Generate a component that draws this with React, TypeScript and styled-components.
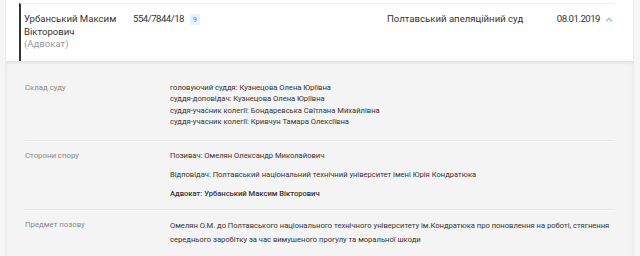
import * as React from "react";
import styled, { createGlobalStyle } from "styled-components";

const GlobalStyle = createGlobalStyle`
  html, body {
    margin: 0;
    padding: 0;
    background: #f6f6f8;
  }
  body {
    font-family: Roboto, "Liberation Sans", Arial, sans-serif;
    color: #333;
  }
`;

const Wrapper = styled.div`
  margin: 0 6px 0 5px;
  height: 256px;
  background: #fff;
  border-left: 1px solid #ececee;
  border-right: 1px solid #ececee;
  padding-top: 3px;
  box-sizing: border-box;
  overflow: hidden;
`;

const Row = styled.div`
  margin: 0 19px 0 13px;
  border-top: 1px solid #efefef;
  border-left: 2px solid ${({ $active }: { $active?: boolean }) =>
    $active ? "#333" : "transparent"};
  padding: 9px 0 10px 3px;
  display: flex;
  align-items: flex-start;
  font-size: 9.6px;
  line-height: 12.5px;
`;

const NameCol = styled.div`
  width: 104px;
  margin-right: 5px;
  flex-shrink: 0;
`;

const Role = styled.div`
  color: #999;
`;

const Digits = styled.span`
  letter-spacing: -0.5px;
`;

const NumberCol = styled.div`
  width: 254px;
  flex-shrink: 0;
  display: flex;
  align-items: center;
  gap: 6px;
`;

const Badge = styled.span`
  display: inline-block;
  min-width: 10px;
  height: 11px;
  line-height: 11px;
  text-align: center;
  font-size: 7.5px;
  color: #4a8fd6;
  background: #e6f0fa;
  border-radius: 2px;
`;

const CourtCol = styled.div`
  flex: 1;
`;

const DateCol = styled.div`
  display: flex;
  align-items: center;
  gap: 5px;
`;

const Chevron = styled.svg`
  width: 8px;
  height: 5px;
  margin-right: 1px;
`;

const Details = styled.div`
  background: #f4f4f4;
  box-shadow: inset 0 2px 3px rgba(0, 0, 0, 0.08);
  padding: 11px 19px 0 19px;
  height: 100%;
`;

const Section = styled.div`
  display: flex;
  padding: ${({ $first }: { $first?: boolean }) =>
    $first ? "10px 0 12px 0" : "9px 0 10px 0"};
  border-top: ${({ $first }: { $first?: boolean }) =>
    $first ? "none" : "1px solid #e6e6e6"};
  box-shadow: ${({ $first }: { $first?: boolean }) =>
    $first ? "none" : "inset 0 1px 0 #fbfbfb"};
`;

const Label = styled.div`
  width: 145px;
  flex-shrink: 0;
  font-size: 7.8px;
  line-height: 11.5px;
  color: #888;
`;

const Values = styled.div`
  flex: 1;
  font-size: 7.6px;
  line-height: ${({ $lh }: { $lh?: number }) => ($lh ? $lh : 11.5)}px;
  color: #333;
`;

const Party = styled.div`
  margin-bottom: 7.5px;
  font-weight: ${({ $bold }: { $bold?: boolean }) => ($bold ? 500 : 400)};
  &:last-child {
    margin-bottom: 0;
  }
`;

export default function App() {
  const judges = [
    "головуючий суддя: Кузнецова Олена Юріївна",
    "суддя-доповідач: Кузнецова Олена Юріївна",
    "суддя-учасник колегії: Бондаревська Світлана Михайлівна",
    "суддя-учасник колегії: Кривчун Тамара Олексіївна",
  ];

  return (
    <>
      <GlobalStyle />
      <Wrapper>
        <Row $active>
          <NameCol>
            Урбанський Максим Вікторович
            <Role>(Адвокат)</Role>
          </NameCol>
          <NumberCol>
            <Digits>554/7844/18</Digits>
            <Badge>9</Badge>
          </NumberCol>
          <CourtCol>Полтавський апеляційний суд</CourtCol>
          <DateCol>
            <Digits>08.01.2019</Digits>
            <Chevron viewBox="0 0 8 5">
              <path
                d="M1 4.3 L4 1.3 L7 4.3"
                fill="none"
                stroke="#8db6e2"
                strokeWidth="1.1"
              />
            </Chevron>
          </DateCol>
        </Row>
        <Details>
          <Section $first>
            <Label>Склад суду</Label>
            <Values>
              {judges.map((j) => (
                <div key={j}>{j}</div>
              ))}
            </Values>
          </Section>
          <Section>
            <Label>Сторони спору</Label>
            <Values>
              <Party>Позивач: Омелян Олександр Миколайович</Party>
              <Party>
                Відповідач: Полтавський національний технічний університет
                імені Юрія Кондратюка
              </Party>
              <Party $bold>Адвокат: Урбанський Максим Вікторович</Party>
            </Values>
          </Section>
          <Section>
            <Label>Предмет позову</Label>
            <Values $lh={14}>
              Омелян О.М. до Полтавського національного технічного
              університету ім.Кондратюка про поновлення на роботі, стягнення
              середнього заробітку за час вимушеного прогулу та моральної шкоди
            </Values>
          </Section>
        </Details>
      </Wrapper>
    </>
  );
}
